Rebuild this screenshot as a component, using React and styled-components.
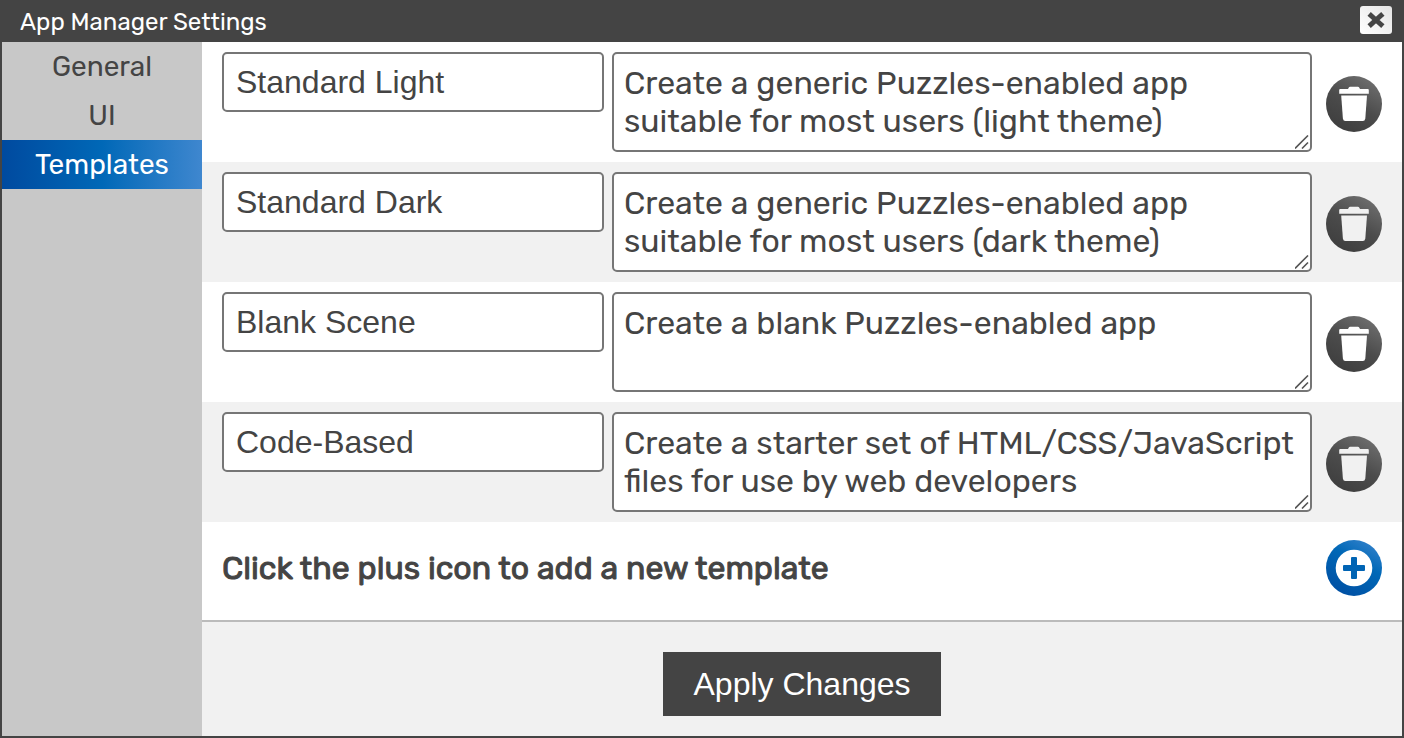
import React, { useState } from 'react';
import styled, { createGlobalStyle, css } from 'styled-components';

const ink = '#444444';
const sans = "Rubik, Roboto, sans-serif";
const arial = "'Liberation Sans', Arial, sans-serif";

const GlobalStyle = createGlobalStyle`
  *, *::before, *::after { box-sizing: border-box; }
  body { margin: 0; font-family: ${sans}; color: ${ink}; -webkit-font-smoothing: antialiased; }
`;

const Dialog = styled.div`
  display: flex;
  flex-direction: column;
  min-height: 100vh;
  border: 2px solid ${ink};
  background: #fff;
`;

const TitleBar = styled.header`
  display: flex;
  align-items: flex-start;
  justify-content: space-between;
  height: 40px;
  padding: 0 10px 0 18px;
  background: ${ink};
  color: #fff;
`;

const Title = styled.h1`
  margin: 0;
  font-size: 24px;
  font-weight: 400;
  line-height: 40px;
`;

const CloseButton = styled.button`
  display: flex;
  align-items: center;
  justify-content: center;
  width: 32px;
  height: 28px;
  margin-top: 4px;
  padding: 0;
  border: 0;
  border-radius: 3px;
  background: linear-gradient(45deg, #fff, #e4e4e4);
  cursor: pointer;
`;

const Body = styled.div`
  display: flex;
  flex: 1;
`;

const Sidebar = styled.nav`
  display: flex;
  flex-direction: column;
  flex: 0 0 200px;
  background: #c8c8c8;
`;

const Tab = styled.button`
  height: 49px;
  padding: 0;
  border: 0;
  background: transparent;
  color: ${ink};
  font-family: ${sans};
  font-size: 28px;
  line-height: 48px;
  text-align: center;
  cursor: pointer;
  ${({ $active }) => $active && css`
    background: linear-gradient(90deg, #004a9f, #0068b7 50%, #3f87cf);
    color: #fff;
  `}
`;

const Main = styled.main`
  display: flex;
  flex: 1;
  flex-direction: column;
  min-width: 0;
`;

const Row = styled.div`
  display: flex;
  align-items: flex-start;
  padding: 10px 20px;
  background: #fff;
  &:nth-child(even) { background: #f1f1f1; }
`;

const NameInput = styled.input`
  flex: 0 0 382px;
  min-width: 0;
  height: 60px;
  margin-right: 8px;
  padding: 0 12px;
  border: 2px solid #767676;
  border-radius: 5px;
  background: #fff;
  color: ${ink};
  font-family: ${arial};
  font-size: 32px;
`;

const DescriptionField = styled.div`
  position: relative;
  display: flex;
  flex: 1;
  min-width: 0;
  margin-right: 14px;
`;

const Description = styled.textarea`
  width: 100%;
  height: 100px;
  padding: 10px;
  border: 2px solid #767676;
  border-radius: 5px;
  background: #fff;
  color: ${ink};
  font-family: ${sans};
  font-size: 32px;
  line-height: 38px;
  overflow: hidden;
  resize: none;
`;

const Grip = styled.svg`
  position: absolute;
  right: 3px;
  bottom: 3px;
  pointer-events: none;
`;

const IconButton = styled.button`
  display: flex;
  flex: 0 0 56px;
  align-items: center;
  justify-content: center;
  height: 56px;
  padding: 0;
  border: 0;
  border-radius: 50%;
  cursor: pointer;
`;

const DeleteButton = styled(IconButton)`
  margin-top: 24px;
  background: linear-gradient(30deg, #3a3a3a, #4c4c4c 50%, #777);
  color: #fff;
  ${Row}:nth-child(even) & { color: #f1f1f1; }
`;

const AddButton = styled(IconButton)`
  background: linear-gradient(30deg, #004a9f, #0068b7 60%, #3f87cf);
`;

const AddRow = styled.div`
  display: flex;
  align-items: center;
  justify-content: space-between;
  height: 100px;
  padding: 0 20px 6px;
  border-bottom: 2px solid #bbb;
`;

const AddLabel = styled.label`
  font-size: 32px;
  font-weight: 400;
  line-height: 40px;
  -webkit-text-stroke: 1px ${ink};
`;

const Footer = styled.footer`
  display: flex;
  flex: 1;
  align-items: flex-start;
  justify-content: center;
  padding: 30px 20px 20px;
  background: #f1f1f1;
`;

const ApplyButton = styled.button`
  height: 64px;
  padding: 0 30px;
  border: 0;
  background: ${ink};
  color: #fff;
  font-family: ${arial};
  font-size: 32px;
  cursor: pointer;
`;

const CloseIcon = () => (
  <svg width="18" height="18" viewBox="0 0 18 18" aria-hidden="true">
    <path d="M4 4.500 14 13.500M14 4.500 4 13.500" stroke={ink} strokeWidth="5" strokeLinecap="square" />
  </svg>
);

const TrashIcon = () => (
  <svg width="56" height="56" viewBox="0 0 56 56" fill="currentColor" aria-hidden="true">
    <path d="M14.2 13H22l1-1.7q.3-.5 1-.5h8q.7 0 1 .5l1 1.7h7.800q1 0 1 1v3.700H13.200V14q0-1 1-1Z" />
    <path d="M15.200 19.500H41L39.300 42.500Q39 45 36.800 45H19.400Q17.200 45 16.900 42.500Z" />
  </svg>
);

const PlusIcon = () => (
  <svg width="56" height="56" viewBox="0 0 56 56" aria-hidden="true">
    <circle cx="28" cy="28" r="18.300" fill="#fff" />
    <path d="M26 17h4q1 0 1 1v7h7q1 0 1 1v4q0 1-1 1h-7v7q0 1-1 1h-4q-1 0-1-1v-7h-7q-1 0-1-1v-4q0-1 1-1h7v-7q0-1 1-1Z" fill="#0064b4" />
  </svg>
);

const tabs = ['General', 'UI', 'Templates'];

const initialTemplates = [
  { name: 'Standard Light', description: 'Create a generic Puzzles-enabled app suitable for most users (light theme)' },
  { name: 'Standard Dark', description: 'Create a generic Puzzles-enabled app suitable for most users (dark theme)' },
  { name: 'Blank Scene', description: 'Create a blank Puzzles-enabled app' },
  { name: 'Code-Based', description: 'Create a starter set of HTML/CSS/JavaScript files for use by web developers' },
];

function TemplateRow({ template }) {
  return (
    <Row>
      <NameInput aria-label="Template name" defaultValue={template.name} />
      <DescriptionField>
        <Description aria-label={`${template.name} description`} defaultValue={template.description} spellCheck={false} />
        <Grip width="14" height="14" viewBox="0 0 14 14" aria-hidden="true">
          <path d="M0 13.500 13 .500M7 13.500 13 7.500" stroke="#555" strokeWidth="1.600" fill="none" />
        </Grip>
      </DescriptionField>
      <DeleteButton type="button" aria-label={`Delete ${template.name}`}>
        <TrashIcon />
      </DeleteButton>
    </Row>
  );
}

export default function App() {
  const [active, setActive] = useState('Templates');
  return (
    <>
      <GlobalStyle />
      <Dialog role="dialog" aria-label="App Manager Settings">
        <TitleBar>
          <Title>App Manager Settings</Title>
          <CloseButton type="button" aria-label="Close"><CloseIcon /></CloseButton>
        </TitleBar>
        <Body>
          <Sidebar>
            {tabs.map((tab) => (
              <Tab key={tab} type="button" $active={tab === active} onClick={() => setActive(tab)}>{tab}</Tab>
            ))}
          </Sidebar>
          <Main>
            <div>
              {initialTemplates.map((template) => (
                <TemplateRow key={template.name} template={template} />
              ))}
            </div>
            <AddRow>
              <AddLabel htmlFor="add-template">Click the plus icon to add a new template</AddLabel>
              <AddButton id="add-template" type="button"><PlusIcon /></AddButton>
            </AddRow>
            <Footer>
              <ApplyButton type="button">Apply Changes</ApplyButton>
            </Footer>
          </Main>
        </Body>
      </Dialog>
    </>
  );
}
